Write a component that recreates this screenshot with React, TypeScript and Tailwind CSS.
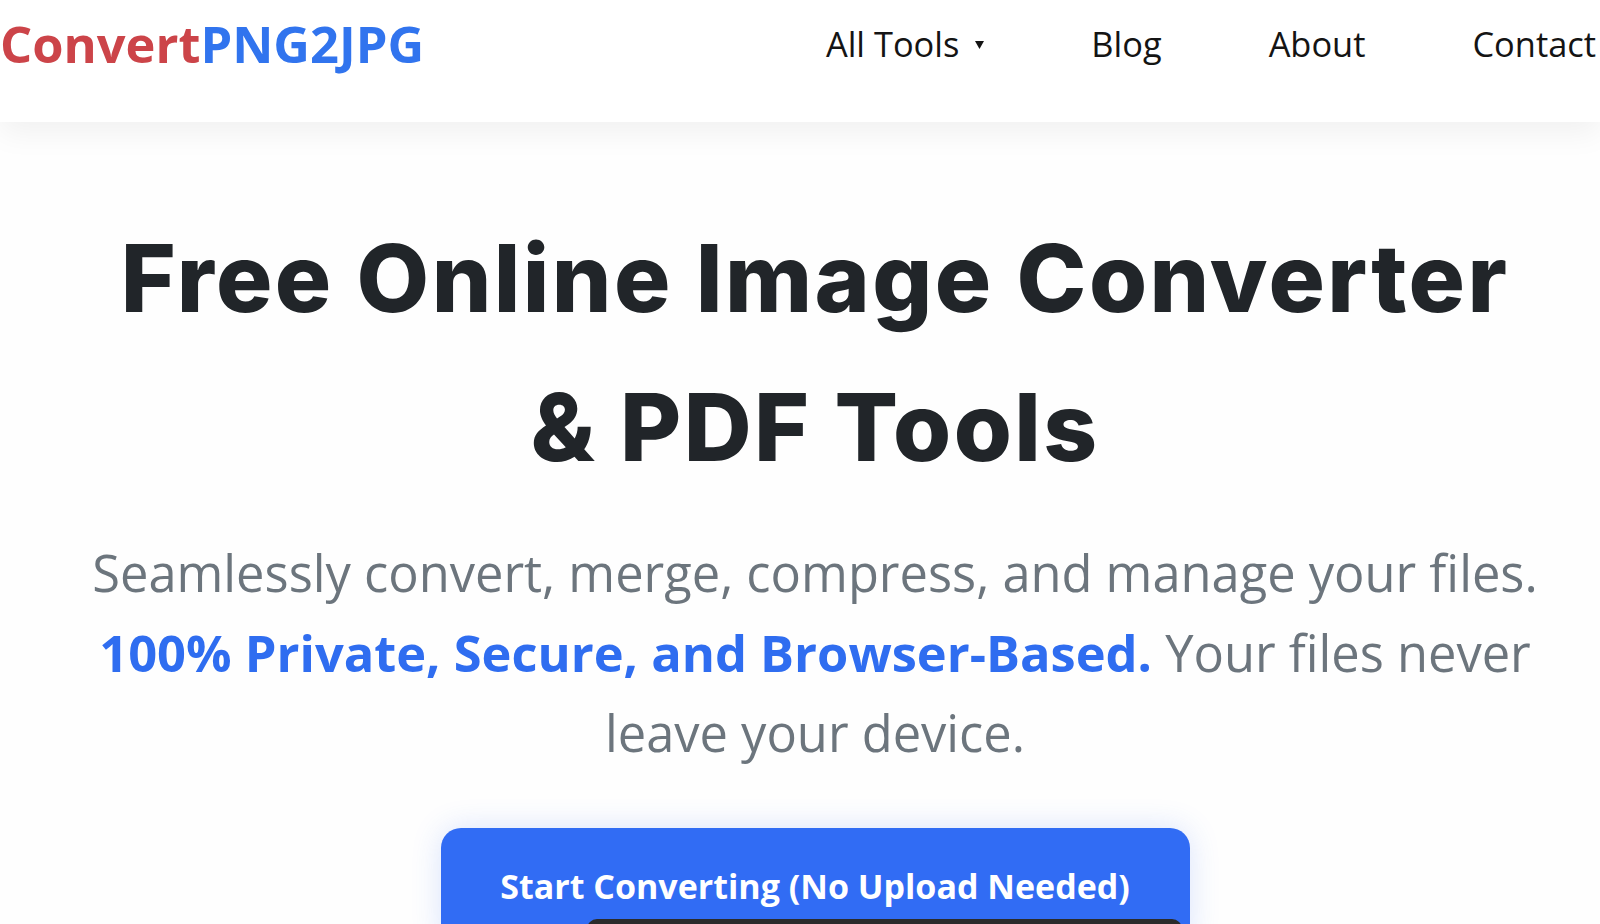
const navLinks = ['Blog', 'About', 'Contact'];

export default function App() {
  return (
    <div className="h-screen overflow-hidden bg-[#fefefe] font-['Open_Sans',sans-serif]">
      {/* Top bar */}
      <header className="relative z-10 h-[122px] bg-white shadow-[0_10px_30px_rgba(0,0,0,0.06)]">
        <div className="flex h-[88px] items-center pl-0 pr-[4px]">
          <a href="#" className="text-[50.6px] font-bold leading-[50px]">
            <span className="text-[#cc4449]">Convert</span>
            <span className="text-[#3174ee]">PNG2JPG</span>
          </a>

          <nav className="ml-auto flex items-center gap-[107px] text-[34.4px] leading-[34px] text-[#141414]">
            <a href="#" className="flex items-center">
              All Tools
              <svg width="9" height="9" viewBox="0 0 9 9" className="ml-[16px]">
                <path d="M0 1h9L4.5 9z" fill="#141414" />
              </svg>
            </a>
            {navLinks.map((label) => (
              <a key={label} href="#">
                {label}
              </a>
            ))}
          </nav>
        </div>
      </header>

      {/* Hero */}
      <main className="pl-[30px] pt-[82px]">
        <h1 className="mx-auto max-w-[1440px] text-center font-['Inter',sans-serif] text-[94px] font-extrabold leading-[149px] tracking-[2.4px] text-[#212529]">
          Free Online Image Converter &amp; PDF Tools
        </h1>

        <p className="mx-auto mt-[31px] max-w-[1510px] text-center text-[50.6px] leading-[80px] text-[#6c757d]">
          Seamlessly convert, merge, compress, and manage your files.{' '}
          <strong className="font-bold text-[#2f6df0]">100% Private, Secure, and Browser-Based.</strong> Your files
          never leave your device.
        </p>

        <div className="mt-[55px] flex justify-center">
          <button className="w-[749px] rounded-[20px] bg-[#316cf4] pt-[41px] text-white shadow-[0_0_30px_rgba(49,108,244,0.18)]">
            <span className="block text-[34px] font-bold leading-[34px]">Start Converting (No Upload Needed)</span>
            <span className="mt-[16px] ml-[146px] mr-[8px] block h-[30px] rounded-t-[10px] bg-[#2b2b2b]" />
          </button>
        </div>
      </main>
    </div>
  );
}
